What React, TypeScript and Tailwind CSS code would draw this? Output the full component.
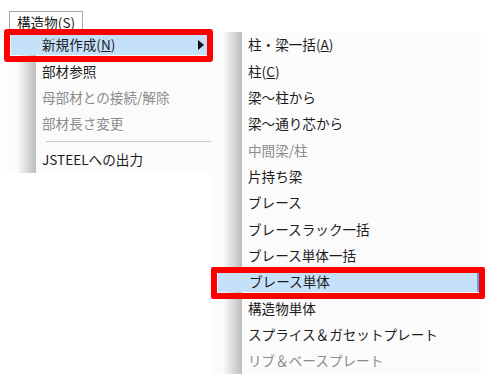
import React from "react";

type Item = {
  label: React.ReactNode;
  disabled?: boolean;
  active?: boolean;
  submenu?: boolean;
  separator?: boolean;
};

const leftItems: Item[] = [
  { label: <>新規作成(<u>N</u>)</>, active: true, submenu: true },
  { label: "部材参照" },
  { label: "母部材との接続/解除", disabled: true },
  { label: "部材長さ変更", disabled: true },
  { label: "", separator: true },
  { label: "JSTEELへの出力" },
];

const rightItems: Item[] = [
  { label: <>柱・梁一括(<u>A</u>)</> },
  { label: <>柱(<u>C</u>)</> },
  { label: "梁～柱から" },
  { label: "梁～通り芯から" },
  { label: "中間梁/柱", disabled: true },
  { label: "片持ち梁" },
  { label: "ブレース" },
  { label: "ブレースラック一括" },
  { label: "ブレース単体一括" },
  { label: "ブレース単体", active: true },
  { label: "構造物単体" },
  { label: "スプライス＆ガセットプレート" },
  { label: "リブ＆ベースプレート", disabled: true },
];

const font = { fontFamily: '"Noto Sans CJK JP", "Noto Sans", sans-serif' };

const Menu = ({ items, width, side }: { items: Item[]; width: string; side: "left" | "right" }) => {
  return (
    <div className={`relative flex ${width} bg-[#fbfbfb]`}>
      {/* gutter */}
      <div className="w-[29px] shrink-0 bg-gradient-to-r from-[#fbfbfb] from-35% to-[#bdbdbd]" />
      <div className="flex-1" />
      <div className="absolute inset-0 flex flex-col">
        {items.map((item, i) =>
          item.separator ? (
            <div key={i} className="h-[10px] flex items-center pl-[39px] pr-[1px]">
              <div className="h-px w-full bg-[#c8c8c8]" />
            </div>
          ) : (
            <div key={i} className="relative h-[26.33px] shrink-0 py-[3px]">
              <div
                className={`h-full flex items-center ${
                  item.active
                    ? side === "left"
                      ? "ml-[4px] mr-[5px] bg-[#c5e1fa]"
                      : "ml-[5px] mr-[2px] bg-[#c5e1fa] border-r-2 border-[#5aa3ec]"
                    : ""
                }`}
              >
                <span
                  className={`text-[13.6px] leading-none whitespace-nowrap ${
                    item.disabled ? "text-[#8c8c8c]" : "text-[#1c1c1c]"
                  } ${item.active ? "pl-[31px]" : "pl-[35px]"}`}
                >
                  {item.label}
                </span>
                {item.submenu && (
                  <svg className="ml-auto mr-[3px]" width="6" height="10" viewBox="0 0 6 10">
                    <path d="M0 0 L6 5 L0 10 Z" fill="#111" />
                  </svg>
                )}
              </div>
              {item.active &&
                (side === "left" ? (
                  <div className="absolute -top-[3px] -bottom-[4px] -left-[3px] -right-[1px] border-[6px] border-[#ff0000] rounded-[3px]" />
                ) : (
                  <div className="absolute -top-[2px] -bottom-[4px] -left-[2px] -right-[4px] border-[6px] border-[#ff0000] rounded-[2px]" />
                ))}
            </div>
          )
        )}
      </div>
    </div>
  );
};

export default function App() {
  return (
    <div className="relative w-[491px] h-[382px] bg-white overflow-hidden pl-[7px]" style={font}>
      {/* menu bar */}
      <div className="h-[32px] pt-[9px] pl-[2px]">
        <div className="inline-flex items-center h-[23px] px-[7px] border border-[#a8a8a8] bg-white text-[13.6px] text-[#1c1c1c] leading-none">
          構造物(S)
        </div>
      </div>
      <div className="flex items-start gap-[1px]">
        <div className="h-[141px] flex">
          <Menu items={leftItems} width="w-[205px]" side="left" />
        </div>
        <div className="h-[342px] flex">
          <Menu items={rightItems} width="w-[268px]" side="right" />
        </div>
      </div>
    </div>
  );
}
